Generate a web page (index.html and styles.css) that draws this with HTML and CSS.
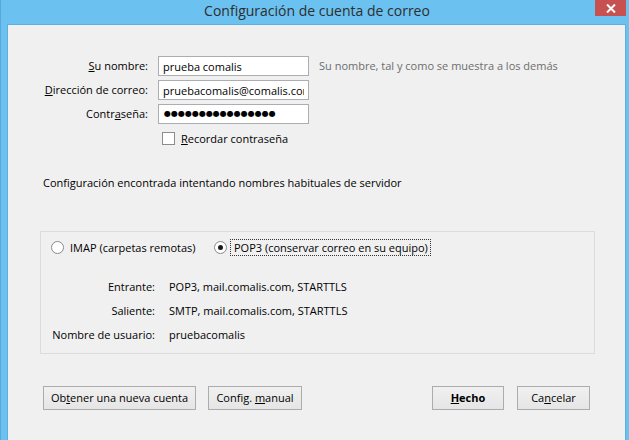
FILE: index.html
```html
<!DOCTYPE html>
<html lang="es">
<head>
    <meta charset="UTF-8">
    <title>Configuración de cuenta de correo</title>
    <link rel="stylesheet" href="styles.css">
</head>
<body>
    <div class="window">
        <div class="titlebar">
            <div class="title">Configuración de cuenta de correo</div>
            <div class="close-btn">
                <svg width="10" height="9" viewBox="0 0 10 9">
                    <path d="M1 0.5 L9 8.5 M9 0.5 L1 8.5" stroke="#fff" stroke-width="2"/>
                </svg>
            </div>
        </div>

        <div class="client">
            <div class="form-grid">
                <label class="field-label"><u>S</u>u nombre:</label>
                <input class="text-input" type="text" value="prueba comalis">
                <div class="hint">Su nombre, tal y como se muestra a los demás</div>

                <label class="field-label"><u>D</u>irección de correo:</label>
                <input class="text-input" type="text" value="pruebacomalis@comalis.com">
                <div></div>

                <label class="field-label">Contr<u>a</u>seña:</label>
                <div class="text-input password">●●●●●●●●●●●●●●●●</div>
                <div></div>

                <div></div>
                <div class="check-row">
                    <span class="checkbox"></span>
                    <span><u>R</u>ecordar contraseña</span>
                </div>
                <div></div>
            </div>

            <div class="info-text">Configuración encontrada intentando nombres habituales de servidor</div>

            <div class="group-box">
                <div class="radio-row">
                    <div class="radio-option imap">
                        <span class="radio"></span>
                        <span class="radio-text">IMAP (carpetas remotas)</span>
                    </div>
                    <div class="radio-option">
                        <span class="radio checked"></span>
                        <span class="radio-text focused">POP3 (conservar correo en su equipo)</span>
                    </div>
                </div>

                <div class="details">
                    <div class="detail-label">Entrante:</div>
                    <div>POP3, mail.comalis.com, STARTTLS</div>
                    <div class="detail-label">Saliente:</div>
                    <div>SMTP, mail.comalis.com, STARTTLS</div>
                    <div class="detail-label">Nombre de usuario:</div>
                    <div>pruebacomalis</div>
                </div>
            </div>

            <div class="button-row">
                <div class="btn btn-new">Ob<u>t</u>ener una nueva cuenta</div>
                <div class="btn btn-manual">Config. <u>m</u>anual</div>
                <div class="spacer"></div>
                <div class="btn btn-done"><u>H</u>echo</div>
                <div class="btn btn-cancel">Ca<u>n</u>celar</div>
            </div>
        </div>
    </div>
</body>
</html>
```

FILE: styles.css
```css
* {
    box-sizing: border-box;
}

body {
    margin: 0;
    padding: 0;
    font-family: "Open Sans", "Noto Sans", sans-serif;
    font-size: 11px;
    color: #000;
}

.window {
    width: 629px;
    height: 440px;
    background-color: #6bc1ef;
    border-left: 1px solid #58a9da;
    overflow: hidden;
}

.titlebar {
    height: 24px;
    display: flex;
    position: relative;
}

.title {
    flex: 1;
    text-align: center;
    font-size: 14px;
    line-height: 22px;
    color: #2e2e2e;
    padding-left: 4px;
}

.close-btn {
    position: absolute;
    top: 0;
    left: 594px;
    width: 31px;
    height: 16px;
    background-color: #c75050;
    display: flex;
    align-items: center;
    justify-content: center;
}

.client {
    margin-left: 6px;
    width: 619px;
    height: 416px;
    background-color: #f0f0f0;
    border: 1px solid #5dafe0;
    border-bottom: none;
}

.form-grid {
    display: grid;
    grid-template-columns: 140px 151px auto;
    grid-auto-rows: 20px;
    column-gap: 10px;
    row-gap: 4px;
    padding-top: 31px;
}

.field-label {
    text-align: right;
    line-height: 20px;
}

.text-input {
    height: 20px;
    width: 151px;
    border: 1px solid #abadb3;
    background-color: #fff;
    font: inherit;
    padding: 0 4px;
    margin: 0;
    outline: none;
    line-height: 18px;
    overflow: hidden;
    white-space: nowrap;
}

.password {
    font-family: "DejaVu Sans", sans-serif;
    font-size: 8px;
    padding-left: 5px;
}

.hint {
    line-height: 20px;
    color: #6d6d6d;
}

.check-row {
    display: flex;
    align-items: center;
    padding-left: 4px;
    gap: 6px;
}

.checkbox {
    width: 13px;
    height: 13px;
    border: 1px solid #8c8c8c;
    background-color: #fff;
}

.info-text {
    margin-top: 27px;
    margin-left: 35px;
    line-height: 16px;
}

.group-box {
    margin-top: 40px;
    margin-left: 32px;
    width: 555px;
    border: 1px solid #dcdcdc;
    padding-top: 7px;
    padding-bottom: 6px;
}

.radio-row {
    display: flex;
    align-items: center;
    height: 17px;
    padding-left: 10px;
}

.radio-option {
    display: flex;
    align-items: center;
}

.imap {
    width: 163px;
    gap: 6px;
}

.radio {
    width: 13px;
    height: 13px;
    border: 1px solid #8a8a8a;
    border-radius: 50%;
    background-color: #fff;
    display: flex;
    align-items: center;
    justify-content: center;
}

.radio.checked::after {
    content: "";
    width: 5px;
    height: 5px;
    border-radius: 50%;
    background-color: #1a1a1a;
}

.focused {
    margin-left: 3px;
    border: 1px dotted #333;
    padding: 0 2px 0 3px;
    line-height: 15px;
}

.details {
    display: grid;
    grid-template-columns: 110px auto;
    grid-auto-rows: 24px;
    column-gap: 14px;
    margin-top: 19px;
    margin-left: 4px;
    line-height: 24px;
}

.detail-label {
    text-align: right;
}

.button-row {
    display: flex;
    margin-top: 32px;
    padding-left: 35px;
    padding-right: 35px;
}

.btn {
    height: 24px;
    border: 1px solid #acacac;
    background: linear-gradient(#f0f0f0, #e5e5e5);
    text-align: center;
    line-height: 22px;
}

.btn-new {
    width: 153px;
}

.btn-manual {
    width: 94px;
    margin-left: 12px;
}

.spacer {
    flex: 1;
}

.btn-done {
    width: 72px;
    font-weight: bold;
}

.btn-cancel {
    width: 73px;
    margin-left: 13px;
}
```
